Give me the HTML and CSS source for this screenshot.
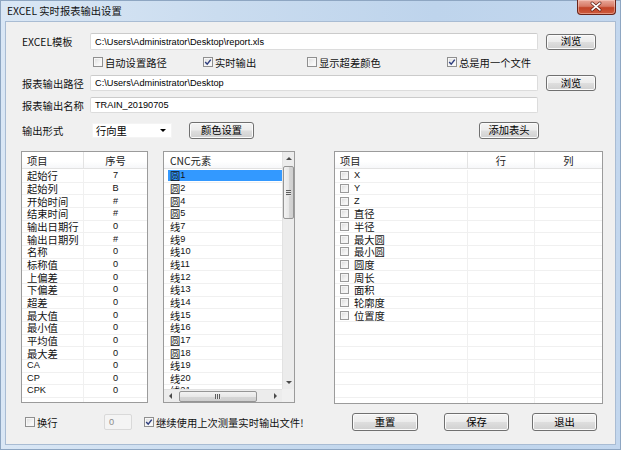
FILE: index.html
```html
<!DOCTYPE html>
<html lang="zh">
<head>
<meta charset="utf-8">
<title>EXCEL 实时报表输出设置</title>
<link rel="stylesheet" href="styles.css">
</head>
<body>
<div class="window">
  <div class="titlebar">
    <span class="title">EXCEL 实时报表输出设置</span>
    <div class="close">
      <svg width="39" height="15" viewBox="0 0 39 15">
        <path d="M15.5 4 L23.5 11 M23.5 4 L15.5 11" stroke="#5a1a10" stroke-width="3.2" stroke-linecap="round"/>
        <path d="M15.5 4 L23.5 11 M23.5 4 L15.5 11" stroke="#ffffff" stroke-width="1.8" stroke-linecap="round"/>
      </svg>
    </div>
  </div>
  <div class="panel">
    <div class="row r-tpl">
      <span class="label">EXCEL模板</span>
      <div class="tb wide"><span class="en">C:\Users\Administrator\Desktop\report.xls</span></div>
      <button class="btn browse">浏览</button>
    </div>
    <div class="row checks">
      <label class="ck ck1"><span class="box"></span><span>自动设置路径</span></label>
      <label class="ck ck2"><span class="box on"><svg width="8" height="8" viewBox="0 0 8 8"><path d="M1.2 4 L3.2 6.2 L6.8 1.6" fill="none" stroke="#2f3f7f" stroke-width="1.5"/></svg></span><span>实时输出</span></label>
      <label class="ck ck3"><span class="box"></span><span>显示超差颜色</span></label>
      <label class="ck"><span class="box on"><svg width="8" height="8" viewBox="0 0 8 8"><path d="M1.2 4 L3.2 6.2 L6.8 1.6" fill="none" stroke="#2f3f7f" stroke-width="1.5"/></svg></span><span>总是用一个文件</span></label>
    </div>
    <div class="row r-path">
      <span class="label">报表输出路径</span>
      <div class="tb wide"><span class="en">C:\Users\Administrator\Desktop</span></div>
      <button class="btn browse">浏览</button>
    </div>
    <div class="row r-name">
      <span class="label">报表输出名称</span>
      <div class="tb wide"><span class="en">TRAIN_20190705</span></div>
    </div>
    <div class="row r-out">
      <span class="label label-out">输出形式</span>
      <div class="combo"><span>行向里</span><span class="arrow-down"></span></div>
      <button class="btn btn-color">颜色设置</button>
      <button class="btn btn-add">添加表头</button>
    </div>

    <div class="tables">
      <div class="ltable">
        <div class="thead">
          <div class="th c1">项目</div>
          <div class="th c2">序号</div>
        </div>
        <div class="tbody">
          <div class="tr"><div class="td c1">起始行</div><div class="td c2 en">7</div></div>
          <div class="tr"><div class="td c1">起始列</div><div class="td c2 en">B</div></div>
          <div class="tr"><div class="td c1">开始时间</div><div class="td c2 en">#</div></div>
          <div class="tr"><div class="td c1">结束时间</div><div class="td c2 en">#</div></div>
          <div class="tr"><div class="td c1">输出日期行</div><div class="td c2 en">0</div></div>
          <div class="tr"><div class="td c1">输出日期列</div><div class="td c2 en">#</div></div>
          <div class="tr"><div class="td c1">名称</div><div class="td c2 en">0</div></div>
          <div class="tr"><div class="td c1">标称值</div><div class="td c2 en">0</div></div>
          <div class="tr"><div class="td c1">上偏差</div><div class="td c2 en">0</div></div>
          <div class="tr"><div class="td c1">下偏差</div><div class="td c2 en">0</div></div>
          <div class="tr"><div class="td c1">超差</div><div class="td c2 en">0</div></div>
          <div class="tr"><div class="td c1">最大值</div><div class="td c2 en">0</div></div>
          <div class="tr"><div class="td c1">最小值</div><div class="td c2 en">0</div></div>
          <div class="tr"><div class="td c1">平均值</div><div class="td c2 en">0</div></div>
          <div class="tr"><div class="td c1">最大差</div><div class="td c2 en">0</div></div>
          <div class="tr"><div class="td c1 en">CA</div><div class="td c2 en">0</div></div>
          <div class="tr"><div class="td c1 en">CP</div><div class="td c2 en">0</div></div>
          <div class="tr"><div class="td c1 en">CPK</div><div class="td c2 en">0</div></div>
          <div class="tr"><div class="td c1"></div><div class="td c2"></div></div>
        </div>
      </div>

      <div class="mlist">
        <div class="mmain">
          <div class="mhead">CNC元素</div>
          <div class="mitems">
            <div class="mi"><span class="sel">圆<span class="en">1</span></span></div>
            <div class="mi">圆<span class="en">2</span></div>
            <div class="mi">圆<span class="en">4</span></div>
            <div class="mi">圆<span class="en">5</span></div>
            <div class="mi">线<span class="en">7</span></div>
            <div class="mi">线<span class="en">9</span></div>
            <div class="mi">线<span class="en">10</span></div>
            <div class="mi">线<span class="en">11</span></div>
            <div class="mi">线<span class="en">12</span></div>
            <div class="mi">线<span class="en">13</span></div>
            <div class="mi">线<span class="en">14</span></div>
            <div class="mi">线<span class="en">15</span></div>
            <div class="mi">线<span class="en">16</span></div>
            <div class="mi">圆<span class="en">17</span></div>
            <div class="mi">圆<span class="en">18</span></div>
            <div class="mi">线<span class="en">19</span></div>
            <div class="mi">线<span class="en">20</span></div>
            <div class="mi">线<span class="en">21</span></div>
          </div>
        </div>
        <div class="vscroll">
          <div class="sb-btn"><span class="tri-up"></span></div>
          <div class="vtrack">
            <div class="vthumb"><span class="grip-v"></span></div>
          </div>
          <div class="sb-btn"><span class="tri-down"></span></div>
        </div>
        <div class="hscroll">
          <div class="sb-btn h"><span class="tri-left"></span></div>
          <div class="htrack">
            <div class="hthumb"><span class="grip-h"></span></div>
          </div>
          <div class="sb-btn h"><span class="tri-right"></span></div>
        </div>
        <div class="corner"></div>
      </div>

      <div class="rtable">
        <div class="thead">
          <div class="th r1">项目</div>
          <div class="th r2">行</div>
          <div class="th r3">列</div>
        </div>
        <div class="tbody">
          <div class="tr"><div class="td r1"><span class="sbox"></span><span class="en">X</span></div><div class="td r2"></div><div class="td r3"></div></div>
          <div class="tr"><div class="td r1"><span class="sbox"></span><span class="en">Y</span></div><div class="td r2"></div><div class="td r3"></div></div>
          <div class="tr"><div class="td r1"><span class="sbox"></span><span class="en">Z</span></div><div class="td r2"></div><div class="td r3"></div></div>
          <div class="tr"><div class="td r1"><span class="sbox"></span><span>直径</span></div><div class="td r2"></div><div class="td r3"></div></div>
          <div class="tr"><div class="td r1"><span class="sbox"></span><span>半径</span></div><div class="td r2"></div><div class="td r3"></div></div>
          <div class="tr"><div class="td r1"><span class="sbox"></span><span>最大圆</span></div><div class="td r2"></div><div class="td r3"></div></div>
          <div class="tr"><div class="td r1"><span class="sbox"></span><span>最小圆</span></div><div class="td r2"></div><div class="td r3"></div></div>
          <div class="tr"><div class="td r1"><span class="sbox"></span><span>圆度</span></div><div class="td r2"></div><div class="td r3"></div></div>
          <div class="tr"><div class="td r1"><span class="sbox"></span><span>周长</span></div><div class="td r2"></div><div class="td r3"></div></div>
          <div class="tr"><div class="td r1"><span class="sbox"></span><span>面积</span></div><div class="td r2"></div><div class="td r3"></div></div>
          <div class="tr"><div class="td r1"><span class="sbox"></span><span>轮廓度</span></div><div class="td r2"></div><div class="td r3"></div></div>
          <div class="tr"><div class="td r1"><span class="sbox"></span><span>位置度</span></div><div class="td r2"></div><div class="td r3"></div></div>
          <div class="tr"><div class="td r1"></div><div class="td r2"></div><div class="td r3"></div></div>
          <div class="tr"><div class="td r1"></div><div class="td r2"></div><div class="td r3"></div></div>
          <div class="tr"><div class="td r1"></div><div class="td r2"></div><div class="td r3"></div></div>
          <div class="tr"><div class="td r1"></div><div class="td r2"></div><div class="td r3"></div></div>
          <div class="tr"><div class="td r1"></div><div class="td r2"></div><div class="td r3"></div></div>
          <div class="tr"><div class="td r1"></div><div class="td r2"></div><div class="td r3"></div></div>
          <div class="tr last"><div class="td r1"></div><div class="td r2"></div><div class="td r3"></div></div>
        </div>
      </div>
    </div>

    <div class="row bottom">
      <label class="ck bck1"><span class="box"></span><span>换行</span></label>
      <div class="tb small"><span class="en">0</span></div>
      <label class="ck bck2"><span class="box on"><svg width="8" height="8" viewBox="0 0 8 8"><path d="M1.2 4 L3.2 6.2 L6.8 1.6" fill="none" stroke="#2f3f7f" stroke-width="1.5"/></svg></span><span>继续使用上次测量实时输出文件!</span></label>
      <button class="btn b-reset">重置</button>
      <button class="btn b-save">保存</button>
      <button class="btn b-exit">退出</button>
    </div>
  </div>
</div>
</body>
</html>
```
FILE: styles.css
```css
* { box-sizing: border-box; margin: 0; padding: 0; }
html, body { margin: 0; width: 621px; height: 450px; overflow: hidden; }
body {
  font-family: "Noto Sans CJK SC", "Liberation Sans", sans-serif;
  font-size: 10.3px;
  color: #000;
  background: #fff;
}
.en { font-family: "Liberation Sans", "DejaVu Sans", sans-serif; font-size: 9.2px; }

.window {
  width: 621px;
  height: 450px;
  display: flex;
  flex-direction: column;
  background: linear-gradient(90deg, #dae7f5 0%, #cadcef 35%, #bed4ec 70%, #c3d7ee 100%);
  box-shadow: inset 0 0 0 1px #8ea6c2;
}
.titlebar {
  height: 22px;
  display: flex;
  align-items: flex-start;
  flex: none;
}
.title {
  padding: 3px 0 0 7px;
  line-height: 16px;
  color: #111;
  white-space: nowrap;
}
.close {
  margin-left: auto;
  margin-right: 5px;
  width: 39px;
  height: 15px;
  border: 1px solid #6a2419;
  border-top: none;
  border-radius: 0 0 4px 4px;
  background: linear-gradient(#e9a99b 0%, #d77a66 45%, #c24428 55%, #cd5a3c 100%);
  box-shadow: inset 0 0 0 1px rgba(255,220,210,0.45);
  display: flex;
}
.close svg { display: block; margin: -1px 0 0 -1px; }

.panel {
  margin: 0 6px 6px 6px;
  flex: 1;
  background: #f0f0f0;
  box-shadow: 0 0 0 1px #a9bcd3;
  padding-top: 11px;
}

.row { display: flex; align-items: center; }
.label { width: 68px; white-space: nowrap; color: #111; }
.tb {
  background: #fff;
  border: 1px solid #dcdcdc;
  border-top-color: #cbcbcb;
  border-radius: 2px;
  height: 100%;
  display: flex;
  align-items: center;
  padding-left: 4px;
  white-space: nowrap;
}
.tb.wide { width: 448px; }

.btn {
  font-family: "Noto Sans CJK SC", "Liberation Sans", sans-serif;
  font-size: 10.3px;
  color: #000;
  border: 1px solid #707070;
  border-radius: 3px;
  background: linear-gradient(#f4f4f4 0%, #ececec 48%, #dedede 52%, #d0d0d0 100%);
  box-shadow: inset 0 0 0 1px #fbfbfb;
  display: flex;
  align-items: center;
  justify-content: center;
  line-height: 1;
  padding: 0;
}
.browse { width: 50px; height: 16px; margin-left: 8px; }

.r-tpl { margin-left: 16px; height: 17px; }
.checks { margin: 6px 0 0 87px; height: 12px; }
.ck { display: flex; align-items: center; gap: 2px; white-space: nowrap; color: #111; }
.ck1 { width: 110px; }
.ck2 { width: 104px; }
.ck3 { width: 140px; }
.box {
  width: 10px;
  height: 10px;
  border: 1px solid #8f8f8f;
  background: linear-gradient(135deg, #dcdcdc 0%, #f4f4f4 60%, #ffffff 100%);
  box-shadow: inset 0 0 0 1px #f7f7f7;
  display: flex;
  align-items: center;
  justify-content: center;
  flex: none;
}
.box svg { display: block; }

.r-path { margin: 7px 0 0 16px; height: 16px; }
.r-name { margin: 6px 0 0 16px; height: 16px; }
.r-out { margin: 9px 0 0 16px; height: 17px; }
.label-out { width: 70px; }
.combo {
  width: 80px;
  height: 15px;
  background: #fff;
  border: 1px solid #f4f4f4;
  display: flex;
  align-items: center;
  padding-left: 3px;
  justify-content: space-between;
  padding-right: 5px;
}
.arrow-down {
  width: 0; height: 0;
  border-left: 3px solid transparent;
  border-right: 3px solid transparent;
  border-top: 3px solid #000;
}
.btn-color { width: 65px; height: 17px; margin-left: 17px; }
.btn-add { width: 60px; height: 17px; margin-left: 225px; }

/* tables */
.tables {
  display: flex;
  align-items: flex-start;
  margin: 12px 0 0 15px;
  height: 253px;
}
.ltable, .rtable, .mlist {
  background: #fff;
  border: 1px solid #9b9b9b;
  overflow: hidden;
}
.ltable { width: 127px; height: 252px; }
.mlist { width: 132px; height: 252px; margin-left: 15px; }
.rtable { width: 269px; height: 253px; margin-left: 39px; }

.thead {
  display: flex;
  height: 17px;
  border-bottom: 1px solid #e2e2e2;
  background: linear-gradient(#ffffff 0%, #ffffff 60%, #f6f7f9 100%);
}
.th {
  display: flex;
  align-items: center;
  color: #222;
  border-right: 1px solid #e3e3e3;
  white-space: nowrap;
}
.tr {
  display: flex;
  height: 12.67px;
  border-bottom: 1px solid #f0f0f0;
}
.td {
  display: flex;
  align-items: center;
  border-right: 1px solid #f0f0f0;
  white-space: nowrap;
  color: #111;
  line-height: 11px;
}
.tbody { padding-top: 1px; }
.ltable .c1 { width: 62px; padding-left: 5px; }
.ltable .c2 { flex: 1; justify-content: center; border-right: none; }

.rtable .r1 { width: 133px; padding-left: 5px; }
.rtable .r2 { width: 67px; justify-content: center; }
.rtable .r3 { flex: 1; justify-content: center; border-right: none; }
.rtable .th.r3 { border-right: none; }
.rtable .td.r1 { gap: 5px; }
.sbox {
  width: 9px;
  height: 9px;
  border: 1px solid #9a9a9a;
  background: linear-gradient(135deg, #d9d9d9 0%, #f2f2f2 60%, #ffffff 100%);
  box-shadow: inset 0 0 0 1px #f4f4f4;
  flex: none;
}

/* middle list */
.mlist {
  display: grid;
  grid-template-columns: 1fr 12px;
  grid-template-rows: 1fr 13px;
}
.mmain { overflow: hidden; }
.mhead {
  height: 17px;
  display: flex;
  align-items: center;
  padding-left: 6px;
  border-bottom: 1px solid #e2e2e2;
  color: #222;
  background: linear-gradient(#ffffff 0%, #ffffff 60%, #f6f7f9 100%);
}
.mitems { padding-top: 1px; }
.mi {
  height: 12.67px;
  border-bottom: 1px solid #f0f0f0;
  padding-left: 6px;
  display: flex;
  align-items: center;
  line-height: 11px;
  white-space: nowrap;
  color: #111;
}
.mi .sel {
  background: #3399ff;
  margin-left: -2px;
  padding-left: 2px;
  width: 115px;
  height: 11px;
  display: flex;
  align-items: center;
}
.vscroll {
  display: flex;
  flex-direction: column;
  background: #ececec;
  border-left: 1px solid #e2e2e2;
}
.sb-btn {
  height: 13px;
  display: flex;
  align-items: center;
  justify-content: center;
  flex: none;
}
.sb-btn.h { width: 13px; height: 100%; }
.vtrack { flex: 1; padding-top: 1px; }
.vthumb {
  width: 11px;
  height: 53px;
  border: 1px solid #959595;
  border-radius: 2px;
  background: linear-gradient(90deg, #f2f2f2 0%, #e8e8e8 50%, #d6d6d6 51%, #cfcfcf 100%);
  margin-left: 0;
  display: flex;
  align-items: center;
  justify-content: center;
}
.grip-v {
  width: 5px;
  height: 6px;
  background: repeating-linear-gradient(#5e5e5e 0 1px, #e5e5e5 1px 2px);
}
.hscroll {
  display: flex;
  background: #ececec;
  border-top: 1px solid #e2e2e2;
}
.htrack { flex: 1; padding-left: 2px; display: flex; align-items: center; }
.hthumb {
  width: 78px;
  height: 11px;
  border: 1px solid #959595;
  border-radius: 2px;
  background: linear-gradient(#f2f2f2 0%, #e8e8e8 50%, #d6d6d6 51%, #cfcfcf 100%);
  display: flex;
  align-items: center;
  justify-content: center;
}
.grip-h {
  width: 6px;
  height: 5px;
  background: repeating-linear-gradient(90deg, #5e5e5e 0 1px, #e5e5e5 1px 2px);
}
.corner { background: #f0f0f0; }
.tri-up { width: 0; height: 0; border-left: 3px solid transparent; border-right: 3px solid transparent; border-bottom: 3px solid #4a4a4a; }
.tri-down { width: 0; height: 0; border-left: 3px solid transparent; border-right: 3px solid transparent; border-top: 3px solid #4a4a4a; }
.tri-left { width: 0; height: 0; border-top: 3px solid transparent; border-bottom: 3px solid transparent; border-right: 3px solid #4a4a4a; }
.tri-right { width: 0; height: 0; border-top: 3px solid transparent; border-bottom: 3px solid transparent; border-left: 3px solid #4a4a4a; }

/* bottom row */
.bottom { margin-top: 9px; padding-left: 19px; height: 18px; }
.bck1 { width: 79px; gap: 2px; }
.tb.small {
  width: 28px;
  height: 16px;
  background: #f4f4f4;
  border-color: #d9d9d9;
  color: #8a8a8a;
}
.bck2 { width: 208px; margin-left: 12px; }
.b-reset { width: 66px; height: 18px; }
.b-save { width: 65px; height: 18px; margin-left: 26px; }
.b-exit { width: 65px; height: 18px; margin-left: 23px; }
```
